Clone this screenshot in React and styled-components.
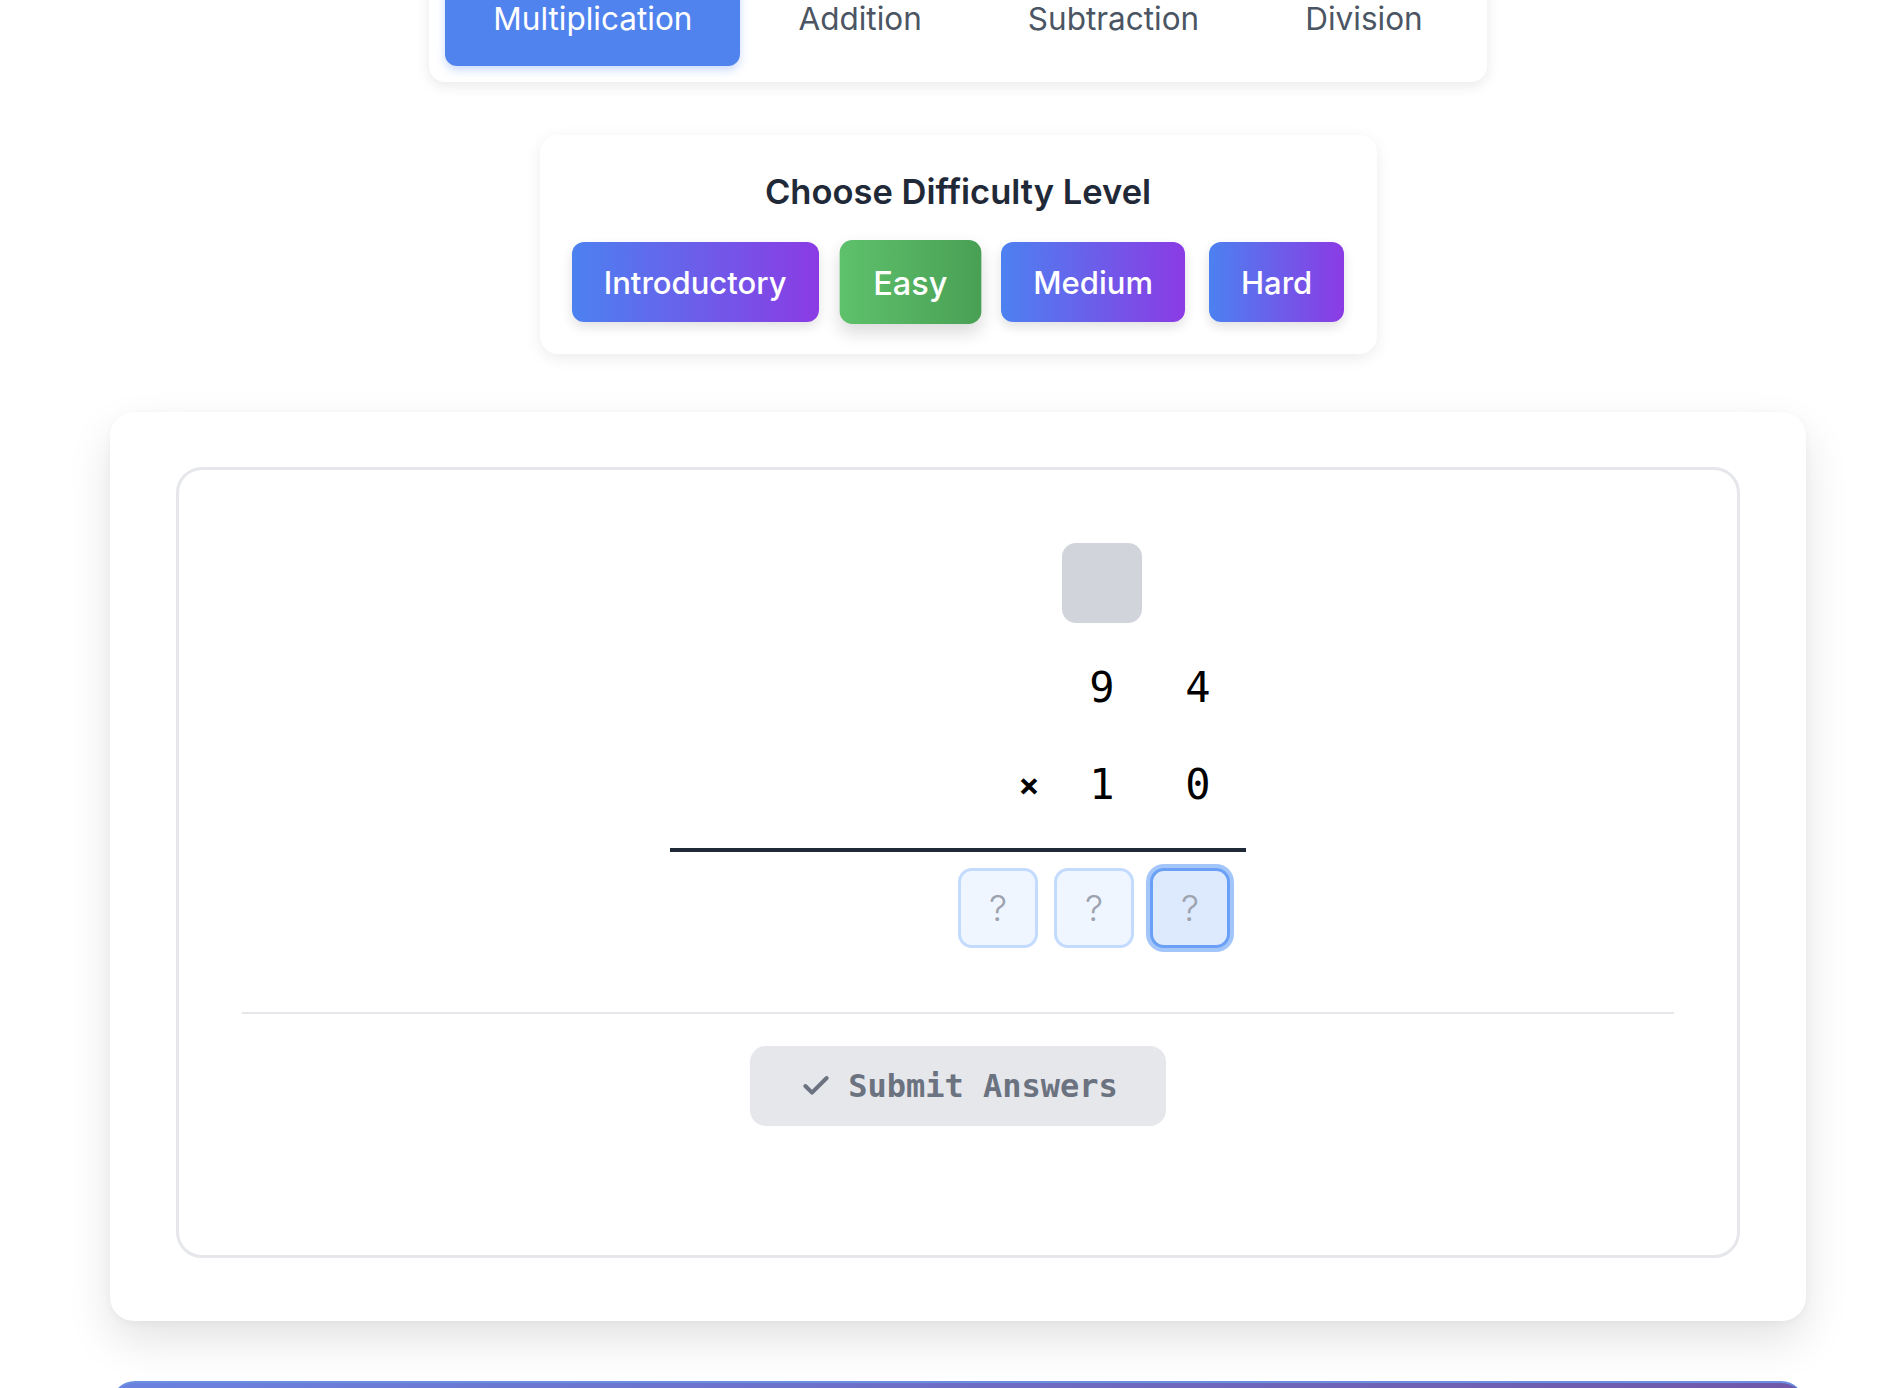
import styled, { createGlobalStyle } from 'styled-components';
import { useState } from 'react';
import { Check } from 'lucide-react';

const GlobalStyle = createGlobalStyle`
    * { box-sizing: border-box; }
    body {
        margin: 0;
        background: #ffffff;
        font-family: Inter, "Noto Sans", sans-serif;
        color: #1f2937;
    }
`;

const operations = ['Multiplication', 'Addition', 'Subtraction', 'Division'];
const levels = ['Introductory', 'Easy', 'Medium', 'Hard'];

export default function App(){
    const [operation, setOperation] = useState('Multiplication');
    const [level, setLevel] = useState('Easy');
    const top = [9, 4];
    const bottom = [1, 0];

    return(
        <>
            <GlobalStyle />
            <Page>
                <TabBar>
                    {operations.map((op) =>
                        <Tab key={op} $active={op === operation} onClick={() => setOperation(op)}>{op}</Tab>
                    )}
                </TabBar>

                <LevelCard>
                    <h2>Choose Difficulty Level</h2>
                    <LevelRow>
                        {levels.map((lv) =>
                            <LevelButton key={lv} $active={lv === level} onClick={() => setLevel(lv)}>{lv}</LevelButton>
                        )}
                    </LevelRow>
                </LevelCard>

                <MainCard>
                    <ProblemBox>
                        <Problem>
                            <DigitRow $carry>
                                <CarryBox />
                                <Cell />
                            </DigitRow>
                            <DigitRow $gapTop={25}>
                                {top.map((d, i) => <Cell key={i}>{d}</Cell>)}
                            </DigitRow>
                            <DigitRow $gapTop={17}>
                                <Sign>×</Sign>
                                {bottom.map((d, i) => <Cell key={i}>{d}</Cell>)}
                            </DigitRow>
                            <Rule />
                            <AnswerRow>
                                <AnswerInput readOnly placeholder="?" />
                                <AnswerInput readOnly placeholder="?" />
                                <AnswerInput readOnly placeholder="?" $focused />
                            </AnswerRow>
                        </Problem>
                        <Divider />
                        <SubmitButton>
                            <Check size={32} strokeWidth={3} />
                            Submit Answers
                        </SubmitButton>
                    </ProblemBox>
                </MainCard>

                <FooterBar />
            </Page>
        </>
    );
}

const Page = styled.div`
    display: flex;
    flex-direction: column;
    align-items: center;
    padding-left: 28px;
    margin-top: -44px;
`

const TabBar = styled.div`
    display: flex;
    gap: 10px;
    padding: 16px;
    background: #ffffff;
    border-radius: 16px;
    box-shadow: 0 4px 14px rgba(0, 0, 0, 0.09);
`

const Tab = styled.button`
    border: none;
    cursor: pointer;
    padding: 32px 48px;
    line-height: 30px;
    font-family: Inter, "Noto Sans", sans-serif;
    font-size: 31.5px;
    font-weight: 400;
    border-radius: 12px;
    background: ${(p) => p.$active ? '#5083ee' : 'transparent'};
    color: ${(p) => p.$active ? '#ffffff' : '#4b5563'};
    box-shadow: ${(p) => p.$active ? '0 4px 10px rgba(80, 131, 238, 0.3)' : 'none'};
`

const LevelCard = styled.div`
    width: 837px;
    margin-top: 53px;
    padding: 35px 32px 32px;
    background: #ffffff;
    border-radius: 18px;
    box-shadow: 0 4px 16px rgba(0, 0, 0, 0.08);
    text-align: center;

    h2{
        margin: 0 0 28px;
        font-size: 34.5px;
        line-height: 44px;
        font-weight: 600;
        color: #1f2937;
    }
`

const LevelRow = styled.div`
    display: flex;
    justify-content: center;
    gap: 24px;
`

const LevelButton = styled.button`
    border: none;
    cursor: pointer;
    height: 80px;
    padding: 0 32px;
    border-radius: 12px;
    font-family: Inter, "Noto Sans", sans-serif;
    font-size: 31px;
    font-weight: 500;
    color: #ffffff;
    background: ${(p) => p.$active
        ? 'linear-gradient(to right, #5ec16b, #49a055)'
        : 'linear-gradient(to right, #4c81f0, #8b3be4)'};
    box-shadow: ${(p) => p.$active ? '0 8px 16px rgba(0, 0, 0, 0.14)' : '0 5px 12px rgba(0, 0, 0, 0.12)'};
    transform: ${(p) => p.$active ? 'scale(1.05)' : 'none'};
`

const MainCard = styled.div`
    width: 1696px;
    margin-top: 58px;
    padding: 55px 66px 63px;
    background: #ffffff;
    border-radius: 24px;
    box-shadow: 0 20px 45px rgba(0, 0, 0, 0.11), 0 2px 8px rgba(0, 0, 0, 0.04);
`

const ProblemBox = styled.div`
    display: flex;
    flex-direction: column;
    align-items: center;
    padding: 0 63px 129px;
    border: 3px solid #e5e7eb;
    border-radius: 26px;
`

const Problem = styled.div`
    width: 576px;
    display: flex;
    flex-direction: column;
    margin-top: 73px;
`

const DigitRow = styled.div`
    display: flex;
    justify-content: flex-end;
    align-items: center;
    gap: 16px;
    padding-right: 8px;
    height: 80px;
    margin-top: ${(p) => p.$carry ? 0 : (p.$gapTop ?? 23)}px;
`

const Cell = styled.div`
    width: 80px;
    height: 80px;
    line-height: 80px;
    text-align: center;
    font-family: "DejaVu Sans Mono", "Liberation Mono", monospace;
    font-size: 42px;
    color: #000000;
`

const Sign = styled.div`
    width: 34px;
    text-align: center;
    font-family: "DejaVu Sans Mono", "Liberation Mono", monospace;
    font-size: 34px;
    font-weight: 700;
    color: #000000;
`

const CarryBox = styled.div`
    width: 80px;
    height: 80px;
    border-radius: 14px;
    background: #d1d5db;
`

const Rule = styled.div`
    height: 4px;
    margin-top: 23px;
    background: #1f2937;
`

const AnswerRow = styled.div`
    display: flex;
    justify-content: flex-end;
    gap: 16px;
    padding-right: 16px;
    margin-top: 16px;
`

const AnswerInput = styled.input`
    width: 80px;
    height: 80px;
    border-radius: 14px;
    text-align: center;
    font-family: Inter, "Noto Sans", sans-serif;
    font-size: 36px;
    font-weight: 300;
    outline: none;
    border: 3px solid ${(p) => p.$focused ? '#6aa1f6' : '#c3dbfd'};
    background: ${(p) => p.$focused ? '#dde9fc' : '#eff6ff'};
    box-shadow: ${(p) => p.$focused ? '0 0 0 4px #a3c6fa' : 'none'};

    &::placeholder{
        color: #9ca3af;
    }
`

const Divider = styled.div`
    align-self: stretch;
    height: 2px;
    margin-top: 64px;
    background: #e5e7eb;
`

const SubmitButton = styled.button`
    display: inline-flex;
    align-items: center;
    gap: 16px;
    height: 80px;
    margin-top: 32px;
    padding: 0 48px 0 50px;
    border: none;
    border-radius: 16px;
    background: #e5e7eb;
    color: #6b7280;
    font-family: "DejaVu Sans Mono", "Liberation Mono", monospace;
    font-size: 32px;
    font-weight: 700;
    cursor: not-allowed;
`

const FooterBar = styled.div`
    width: 1694px;
    height: 120px;
    margin-top: 60px;
    border-radius: 24px 24px 0 0;
    border-top: 2px solid #6a8fe0;
    background: linear-gradient(to right, #6a82df, #7058a8);
`
